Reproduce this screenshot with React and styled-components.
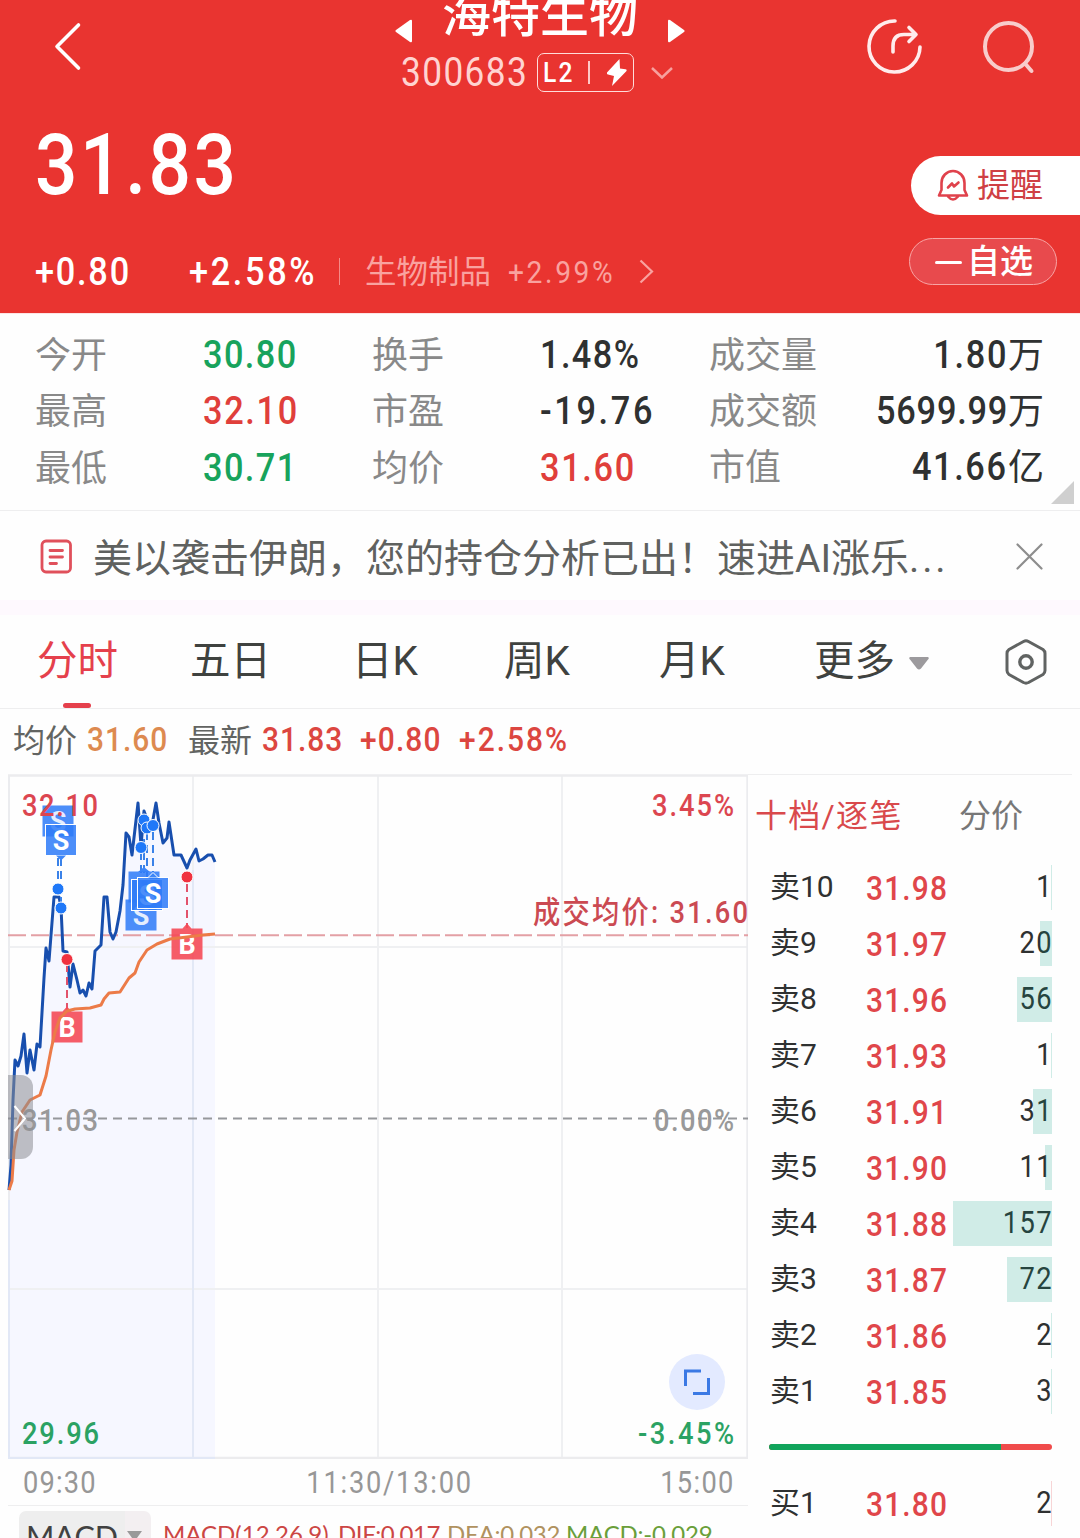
import React from 'react';
import styled, { createGlobalStyle } from 'styled-components';

const RED = '#e93430';
const UP = '#e0464a';
const DOWN = '#18a35c';
const INK = '#2f3131';
const LINE = '#eeeeef';
const NARROW = 0.88;

const Global = createGlobalStyle`
  * { box-sizing: border-box; }
  html, body { margin: 0; padding: 0; background: #fefefe; }
  svg { display: block; flex: none; }
`;

const Page = styled.div`
  width: 1080px;
  height: 1538px;
  overflow: hidden;
  background: #fefefe;
  font-family: Roboto, 'Noto Sans CJK SC', sans-serif;
  color: ${INK};
  white-space: nowrap;
`;

/* Condensed numerals used for every figure on the page */
const Num = styled.span`
  display: inline-block;
  font-size: ${(p) => p.$size || 39}px;
  font-weight: ${(p) => p.$weight || 500};
  letter-spacing: ${(p) => p.$track ?? 1.6}px;
  color: ${(p) => p.$color || 'inherit'};
  transform: scaleX(${NARROW});
  transform-origin: ${(p) => p.$origin || 'left'} center;
`;

/* ---------- header ---------- */
const Header = styled.header`
  height: 313px;
  background: ${RED};
  color: #fff;
`;
const TopBar = styled.div`
  display: grid;
  grid-template-columns: 1fr 290px 1fr;
  height: 93px;
`;
const BackSlot = styled.div`
  display: flex;
  align-items: center;
  padding: 0 0 3px 50px;
`;
const ActionSlot = styled.div`
  display: flex;
  align-items: center;
  justify-content: flex-end;
  gap: 55px;
  padding: 0 41px 4px 0;
`;
const TitleBlock = styled.div`
  display: flex;
  flex-direction: column;
`;
const NameRow = styled.div`
  display: flex;
  justify-content: space-between;
  align-items: flex-start;
  height: 50px;
  svg { margin-top: 19px; }
`;
const Name = styled.h1`
  margin: 0;
  font-size: 49px;
  line-height: 32px;
  font-weight: 500;
`;
const CodeRow = styled.div`
  display: flex;
  align-items: center;
  height: 45px;
  padding-left: 6px;
`;
const CodeSlot = styled.span`
  width: 136px;
`;
const LevelBadge = styled.span`
  display: flex;
  align-items: center;
  width: 97px;
  height: 39px;
  margin-right: 17px;
  padding-left: 5px;
  border: 1.5px solid #ffdcda;
  border-radius: 7px;
`;
const BadgeText = styled.span`
  width: 45px;
`;
const BadgeRule = styled.i`
  width: 1.5px;
  height: 23px;
  margin-right: 17px;
  background: #ffc9c7;
`;
const Quote = styled.div`
  display: flex;
  justify-content: space-between;
  height: 220px;
`;
const QuoteLeft = styled.div`
  padding-left: 35px;
`;
const Price = styled.div`
  height: 145px;
  line-height: 145px;
`;
const ChangeRow = styled.div`
  display: flex;
  align-items: center;
  height: 67px;
`;
const Slot = styled.span`
  width: ${(p) => p.$w}px;
`;
const Rule = styled.i`
  width: 1px;
  height: 27px;
  margin-right: 25px;
  background: #f58a87;
`;
const Sector = styled.span`
  width: 143px;
  padding-bottom: 5px;
  font-size: 31.5px;
  color: #f9a29f;
`;
const QuoteRight = styled.div`
  display: flex;
  flex-direction: column;
  align-items: flex-end;
  gap: 23px;
  padding-top: 63px;
`;
const Remind = styled.button`
  display: flex;
  align-items: center;
  gap: 8px;
  width: 169px;
  height: 59px;
  padding: 0 0 1px 26px;
  border: 0;
  border-radius: 30px 0 0 30px;
  background: #fff;
  color: #cf4044;
  font: 400 33px/57px Roboto, 'Noto Sans CJK SC', sans-serif;
`;
const Watch = styled.button`
  display: flex;
  align-items: center;
  gap: 5px;
  width: 148px;
  height: 47px;
  margin-right: 23px;
  padding: 0 0 0 25px;
  border: 1px solid #f8a5a5;
  border-radius: 24px;
  background: #e84a4d;
  color: #fff;
  font: 500 33px/44px Roboto, 'Noto Sans CJK SC', sans-serif;
`;
const Minus = styled.i`
  width: 27px;
  height: 3px;
  margin-top: 2px;
  border-radius: 2px;
  background: #fff;
`;

/* ---------- statistics ---------- */
const Stats = styled.section`
  position: relative;
  display: grid;
  grid-template-columns: 168px 169px 168px 169px 1fr;
  grid-auto-rows: 56.3px;
  align-items: center;
  height: 198px;
  padding: 14px 36px 0 35px;
  border-bottom: 1px solid ${LINE};
  box-shadow: inset 0 1px #fde4e4;
`;
const StatLabel = styled.span`
  font-size: 36px;
  line-height: 56px;
  height: 56px;
  padding-top: 1px;
  color: #898989;
`;
const StatValue = styled(Num)`
  line-height: 56px;
`;
const Last = styled.div`
  display: flex;
  justify-content: space-between;
`;
const Unit = styled.span`
  font-size: 36px;
  line-height: 56px;
`;
const Fold = styled.i`
  position: absolute;
  right: 6px;
  bottom: 6px;
  width: 23px;
  height: 23px;
  background: #cfcfcf;
  clip-path: polygon(100% 0, 100% 100%, 0 100%);
`;

/* ---------- notice ---------- */
const Notice = styled.section`
  display: flex;
  align-items: center;
  height: 89px;
  padding: 2px 37px 0 40px;
`;
const NoticeText = styled.p`
  flex: 1;
  margin: 4px 0 0 20px;
  font-size: 39px;
  line-height: 60px;
  color: #5f615f;
`;
const Dots = styled.span`
  letter-spacing: 2.8px;
`;
const Band = styled.div`
  height: 15px;
  background: #fef9fe;
`;

/* ---------- period tabs ---------- */
const Tabs = styled.nav`
  display: flex;
  height: 94px;
  padding-left: 37px;
  border-bottom: 1px solid ${LINE};
`;
const Tab = styled.span`
  position: relative;
  width: ${(p) => p.$w}px;
  font-size: 40.5px;
  line-height: 92px;
  color: ${(p) => (p.$active ? '#e5404c' : '#3f423f')};
  &::after {
    content: '';
    position: absolute;
    display: ${(p) => (p.$active ? 'block' : 'none')};
    left: 26px;
    bottom: 0;
    width: 28px;
    height: 5px;
    border-radius: 3px;
    background: #e5404c;
  }
`;
const TabIcon = styled.span`
  display: flex;
  align-items: center;
  width: ${(p) => p.$w}px;
  height: 93px;
`;
const Caret = styled(TabIcon)`
  padding-top: 3px;
`;
const Summary = styled.div`
  display: flex;
  align-items: center;
  height: 65px;
  padding: 0 0 5px 13px;
`;
const SummaryLabel = styled.span`
  width: 74px;
  padding-bottom: 3px;
  font-size: 32px;
  color: #626462;
`;

/* ---------- chart + order book ---------- */
const Board = styled.section`
  display: grid;
  grid-template-columns: 748px 324px;
  height: 764px;
`;
const ChartSide = styled.div`
  display: flex;
  flex-direction: column;
`;
const Axis = styled.div`
  display: grid;
  grid-template-columns: 200px 1fr 200px;
  height: 46px;
  padding: 0 13px 0 23px;
  line-height: 48px;
  color: #979797;
`;
const Tick = styled.span`
  text-align: ${(p) => p.$align};
  padding-left: ${(p) => (p.$align === 'center' ? 22 : 0)}px;
`;
const Macd = styled.div`
  display: flex;
  align-items: flex-start;
  height: 33px;
  margin-left: 8px;
  padding: 5px 0 0 11px;
  border-top: 1px solid ${LINE};
  font-family: Lato, sans-serif;
`;
const MacdPick = styled.span`
  display: flex;
  align-items: center;
  gap: 9px;
  width: 132px;
  height: 51px;
  margin-right: 12px;
  padding: 0 0 2px 7px;
  border-radius: 7px;
  background: linear-gradient(90deg, #eeeeee 80%, #f3eff1 80%);
  font-size: 30.5px;
  color: #414141;
`;
const MacdValue = styled.span`
  width: ${(p) => p.$w}px;
  font-size: 24px;
  line-height: 45px;
  letter-spacing: ${(p) => p.$track || 0}px;
  color: ${(p) => p.$color};
`;
const Book = styled.aside`
  border-top: 1px solid ${LINE};
`;
const BookTabs = styled.div`
  display: flex;
  height: 84px;
  padding-left: 7px;
  font-size: 32px;
  line-height: 83px;
`;
const BookTab = styled.span`
  width: ${(p) => p.$w}px;
  letter-spacing: ${(p) => (p.$active ? 1.3 : 0)}px;
  color: ${(p) => (p.$active ? '#d9494c' : '#777')};
`;
const Level = styled.div`
  position: relative;
  display: grid;
  grid-template-columns: 96px 90px 1fr;
  align-items: center;
  height: 56px;
  padding: 0 20px 0 22px;
  line-height: 56px;
`;
const LevelName = styled.span`
  height: 58px;
  font-size: 30px;
`;
const Qty = styled(Num)`
  height: 58px;
  margin-right: -1px;
  text-align: right;
`;
const Depth = styled.i`
  position: absolute;
  right: 20px;
  top: 6px;
  height: 45px;
  background: ${(p) => (p.$buy ? 'rgba(224,70,74,.22)' : 'rgba(0,155,125,.18)')};
`;
const Ratio = styled.div`
  display: flex;
  height: 6px;
  margin: 25px 20px 25px 21px;
  border-radius: 3px;
  overflow: hidden;
  background: #f04b4b;
  &::before {
    content: '';
    width: 232px;
    background: #10a45b;
  }
`;

const stats = [
  ['今开', '30.80', DOWN, 1.6, '换手', '1.48%', INK, 1.6, '成交量', '1.80', '万', 2],
  ['最高', '32.10', '#e03f3b', 1.9, '市盈', '-19.76', INK, 3, '成交额', '5699.99', '万', 0.9],
  ['最低', '30.71', DOWN, 1.6, '均价', '31.60', '#e03f3b', 1.9, '市值', '41.66', '亿', 1.8],
];

const asks = [
  ['卖10', '31.98', 1, 1],
  ['卖9', '31.97', 20, 12],
  ['卖8', '31.96', 56, 35],
  ['卖7', '31.93', 1, 1],
  ['卖6', '31.91', 31, 19],
  ['卖5', '31.90', 11, 7],
  ['卖4', '31.88', 157, 99],
  ['卖3', '31.87', 72, 45],
  ['卖2', '31.86', 2, 1],
  ['卖1', '31.85', 3, 1],
];

const pricePts =
  '9,1190 11,1165 13,1100 15,1060 18,1066 21,1056 24,1034 27,1073 30,1050 34,1070 37,1044 40,1047 44,978 46,948 49,961 54,897 59,897 61,907 63,951 67,952 70,987 73,964 77,980 80,993 83,990 86,996 89,983 92,989 95,951 101,945 104,897 107,897 110,932 113,939 116,932 120,911 123,885 126,833 129,837 132,855 138,803 141,846 144,811 148,822 152,825 156,803 159,823 163,843 167,838 169,822 174,855 181,855 187,868 190,860 196,849 199,861 203,859 208,855 212,855 215,862';
const avgPts =
  '9,1190 12,1181 14,1150 17,1132 22,1112 30,1100 40,1095 46,1076 51,1050 55,1032 60,1018 67,1011 75,1009 90,1008 101,1005 104,999 109,993 120,992 129,978 135,973 139,962 147,950 157,944 170,939 187,937 203,935 215,934';

const Sell = ({ x, y, ghost }) => (
  <g>
    <rect x={x - 15.5} y={y - 15.5} width="31" height="31" fill="#2f7bf8" fillOpacity=".86" stroke="#fff" strokeWidth={ghost ? 0 : 1} />
    <text x={x} y={y + 10} textAnchor="middle" fontSize="27" fontWeight="700" fill="#fff" opacity={ghost ? 0.85 : 1}>S</text>
  </g>
);

const Buy = ({ x, y }) => (
  <g>
    <path d={`M${x - 15.5},${y - 15.5}h11l4.5,-5l4.5,5h11v31h-31z`} fill="#f54a58" fillOpacity=".9" />
    <text x={x} y={y + 9.5} textAnchor="middle" fontSize="27" fontWeight="700" fill="#fff">B</text>
  </g>
);

const Dot = ({ x, y, c = '#1f78f8' }) => (
  <circle cx={x} cy={y} r="6" fill={c} stroke="#fff" strokeWidth="1" />
);

const Label = ({ x, y, w, color, children }) => (
  <text
    transform={`translate(${x} ${y}) scale(${NARROW} 1)`}
    textLength={w / NARROW}
    lengthAdjust="spacing"
    fontSize="31"
    fontWeight="500"
    fill={color}
  >
    {children}
  </text>
);

const Chart = () => (
  <svg width="748" height="685" viewBox="0 774 748 685" fontFamily="Roboto, 'Noto Sans CJK SC', sans-serif">
    <polygon points={`8,1459 ${pricePts} 215,1459`} fill="#f6f7ff" />
    <g stroke="#eff0f2" strokeWidth="2" fill="none">
      <path d="M193,776V1459M378,776V1459M562,776V1459M9,947H747M9,1289H747" />
      <path d="M9,776V1459M747.3,776V1459" stroke="#ebecef" />
      <path d="M8,775.5H748M8,1458H748" stroke="#ececee" strokeWidth="2.6" />
    </g>
    <path d="M193,870V1459M9,1200V1458H215" stroke="#e2e8f6" strokeWidth="2" fill="none" />
    <path d="M8,1118.5H748" stroke="#96989c" strokeWidth="2" strokeDasharray="9 6" />
    <path d="M8,935.3H748" stroke="#e3a0a5" strokeWidth="2" strokeDasharray="18 5" />
    <polyline points={pricePts} fill="none" stroke="#184fae" strokeWidth="3" strokeLinejoin="round" />

    <g strokeWidth="2" strokeDasharray="8 5" fill="none">
      <path d="M58,858V884M61,858V903" stroke="#3a82e8" />
      <path d="M141,852V880M144,826V880M147,832V880M153,832V878" stroke="#3a82e8" />
      <path d="M187,884V928M67,964V1010" stroke="#e2526b" />
    </g>
    <Sell x={58} y={821} ghost />
    <Sell x={61} y={840} />
    <path d="M56,855.5h10l-5,5z" fill="#3d86f8" />
    <Dot x={58} y={889} />
    <Dot x={61} y={908} />
    <Sell x={141} y={915} ghost />
    <path d="M138,872l6,-5l6,5z" fill="#3d86f8" />
    <Sell x={144} y={887} ghost />
    <Sell x={147} y={895} />
    <Sell x={153} y={893} />
    <path d="M148,877.5l5,-5l5,5" fill="#3d86f8" stroke="#fff" strokeWidth="1" />
    <Dot x={141} y={847.5} />
    <Dot x={144} y={820} />
    <Dot x={147} y={828} />
    <Dot x={153} y={825.5} />
    <Dot x={67} y={959.5} c="#f0323f" />
    <Dot x={187} y={877} c="#f0323f" />
    <Buy x={67} y={1027} />
    <Buy x={187} y={944} />
    <polyline points={avgPts} fill="none" stroke="#ec7b48" strokeWidth="3" strokeLinejoin="round" />

    <Label x={22} y={816} w={76} color="#dc4650">32.10</Label>
    <Label x={652} y={816} w={82} color="#dc4650">3.45%</Label>
    <Label x={533} y={923} w={215} color="#cb4a52">成交均价: 31.60</Label>
    <Label x={22} y={1131} w={76} color="#999">31.03</Label>
    <Label x={654} y={1131} w={80} color="#999">0.00%</Label>
    <Label x={22} y={1443.5} w={77} color="#2ba263">29.96</Label>
    <Label x={638} y={1443.5} w={96} color="#2ba263">-3.45%</Label>

    <path d="M8,1075H21a12,12 0 0 1 12,12V1147a12,12 0 0 1 -12,12H8z" fill="#8c8e94" fillOpacity=".55" />
    <path d="M14.5,1106L25,1118.5L14.5,1131" fill="none" stroke="#fff" strokeWidth="2" />
    <circle cx="697" cy="1382" r="28" fill="#e3eaff" />
    <path d="M701,1371H685.5V1386M693,1393.5H708.5V1378" fill="none" stroke="#3b79e4" strokeWidth="3" />
  </svg>
);

export default function App() {
  return (
    <Page>
      <Global />
      <Header>
        <TopBar>
          <BackSlot>
            <svg width="36" height="54" viewBox="0 0 36 54" fill="none" stroke="#fff" strokeWidth="3.6" strokeLinecap="round" strokeLinejoin="round">
              <path d="M28.5 6L7 27.5L28.5 49" />
            </svg>
          </BackSlot>
          <TitleBlock>
            <NameRow>
              <svg width="18" height="24" viewBox="0 0 18 24"><path d="M17 2v20q0 2-2 1L1 13q-1.200-1 0-2L15 1q2-1 2 1z" fill="#fff" /></svg>
              <Name>海特生物</Name>
              <svg width="18" height="24" viewBox="0 0 18 24"><path d="M1 2v20q0 2 2 1L17 13q1.200-1 0-2L3 1Q1 0 1 2z" fill="#fff" /></svg>
            </NameRow>
            <CodeRow>
              <CodeSlot><Num $size={40} $track={1.6} $weight={400} $color="#ffd3d1">300683</Num></CodeSlot>
              <LevelBadge>
                <BadgeText><Num $size={28} $track={2.4}>L2</Num></BadgeText>
                <BadgeRule />
                <svg width="20" height="27" viewBox="0 0 20 27"><path d="M12.5 0L0 13.5Q-.5 15 1 15.5L7 17L5 27L19.5 12Q20 10.5 18.5 10.3L13 9.5z" fill="#fff" /></svg>
              </LevelBadge>
              <svg width="22" height="12" viewBox="0 0 22 12" fill="none" stroke="#f7a09e" strokeWidth="2.5"><path d="M1 1l10 9.5L21 1" /></svg>
            </CodeRow>
          </TitleBlock>
          <ActionSlot>
            <svg width="60" height="60" viewBox="0 0 60 60" fill="none" stroke="#ffecec" strokeWidth="3.6" strokeLinecap="round" strokeLinejoin="round">
              <path d="M31 5A25.500 25.500 0 1 0 56 31" />
              <path d="M29 36V30Q29 18.500 40 18.500H51M45 11.500L52 18.500L45 25.500" />
            </svg>
            <svg width="60" height="60" viewBox="0 0 60 60" fill="none" stroke="#f8cccb" strokeWidth="4" strokeLinecap="round">
              <circle cx="29.5" cy="30.5" r="23.5" />
              <path d="M46 47.5L52.5 55" />
            </svg>
          </ActionSlot>
        </TopBar>
        <Quote>
          <QuoteLeft>
            <Price><Num $size={85} $track={2.9}>31.83</Num></Price>
            <ChangeRow>
              <Slot $w={154}><Num $track={2}>+0.80</Num></Slot>
              <Slot $w={150}><Num $track={3}>+2.58%</Num></Slot>
              <Rule />
              <Sector>生物制品</Sector>
              <Slot $w={131}><Num $size={32} $track={3} $weight={400} $color="#f9a29f">+2.99%</Num></Slot>
              <svg width="15" height="25" viewBox="0 0 15 25" fill="none" stroke="#f9a29f" strokeWidth="2.2"><path d="M1.5 1.5L13 12.5L1.5 23.5" /></svg>
            </ChangeRow>
          </QuoteLeft>
          <QuoteRight>
            <Remind>
              <svg width="32" height="34" viewBox="0 0 32 34" fill="none" stroke="#e0424c" strokeWidth="2.6" strokeLinecap="round" strokeLinejoin="round">
                <path d="M4.5 22V15a11.5 12 0 0 1 23 0V22L30 27.5H2L4.5 22M11 28.5q5 6 10 0" />
                <path d="M11 19.5L15 15.5L17 18.5L21.5 14.5" />
              </svg>
              提醒
            </Remind>
            <Watch><Minus />自选</Watch>
          </QuoteRight>
        </Quote>
      </Header>

      <Stats>
        {stats.map((s) => (
          <React.Fragment key={s[0]}>
            <StatLabel>{s[0]}</StatLabel>
            <StatValue $color={s[2]} $track={s[3]}>{s[1]}</StatValue>
            <StatLabel>{s[4]}</StatLabel>
            <StatValue $color={s[6]} $track={s[7]}>{s[5]}</StatValue>
            <Last>
              <StatLabel>{s[8]}</StatLabel>
              <span>
                <StatValue $track={s[11]} $origin="right">{s[9]}</StatValue>
                <Unit>{s[10]}</Unit>
              </span>
            </Last>
          </React.Fragment>
        ))}
        <Fold />
      </Stats>

      <Notice>
        <svg width="33" height="35" viewBox="0 0 33 35" fill="none" stroke="#e0505b" strokeWidth="2.8" strokeLinecap="round">
          <rect x="2" y="2" width="28.5" height="31" rx="4" />
          <path d="M10 11.5H22.5M10 18H22.5M10 24.5H16.5" />
        </svg>
        <NoticeText>美以袭击伊朗，您的持仓分析已出！速进AI涨乐<Dots>...</Dots></NoticeText>
        <svg width="27" height="27" viewBox="0 0 27 27" fill="none" stroke="#8d8d8d" strokeWidth="2.2" strokeLinecap="round"><path d="M1.5 1.5l24 24M25.5 1.5l-24 24" /></svg>
      </Notice>
      <Band />

      <Tabs>
        <Tab $w={153} $active>分时</Tab>
        <Tab $w={162}>五日</Tab>
        <Tab $w={152}>日K</Tab>
        <Tab $w={155}>周K</Tab>
        <Tab $w={155}>月K</Tab>
        <Tab $w={95}>更多</Tab>
        <Caret $w={96}>
          <svg width="20" height="13" viewBox="0 0 20 13"><path d="M1 0H19Q20.5 1 19 2.5L12 11.5Q10 13.5 8 11.5L1 2.5Q-.5 1 1 0z" fill="#9c9a9d" /></svg>
        </Caret>
        <TabIcon $w={44}>
          <svg width="42" height="46" viewBox="0 0 42 46" fill="none" stroke="#606362" strokeWidth="3" strokeLinejoin="round">
            <path d="M18.5 2.5Q21 1.2 23.5 2.5L38 10.5Q40 12 40 14.5V31.500Q40 34 38 35.500L23.500 43.500Q21 44.800 18.500 43.500L4 35.500Q2 34 2 31.500V14.500Q2 12 4 10.500z" />
            <circle cx="21" cy="23" r="6.2" strokeWidth="3.4" />
          </svg>
        </TabIcon>
      </Tabs>
      <Summary>
        <SummaryLabel>均价</SummaryLabel>
        <Slot $w={101}><Num $size={34} $track={1.1} $color="#dd8a50">31.60</Num></Slot>
        <SummaryLabel>最新</SummaryLabel>
        <Slot $w={98}><Num $size={34} $track={1.1} $color="#dc4640">31.83</Num></Slot>
        <Slot $w={99}><Num $size={34} $track={1.3} $color="#dc4640">+0.80</Num></Slot>
        <Num $size={34} $track={2.3} $color="#dc4640">+2.58%</Num>
      </Summary>

      <Board>
        <ChartSide>
          <Chart />
          <Axis>
            <Tick $align="left"><Num $size={31} $weight={400} $track={1.3}>09:30</Num></Tick>
            <Tick $align="center"><Num $size={31} $weight={400} $track={2} $origin="center">11:30/13:00</Num></Tick>
            <Tick $align="right"><Num $size={31} $weight={400} $track={1.5} $origin="right">15:00</Num></Tick>
          </Axis>
          <Macd>
            <MacdPick>
              MACD
              <svg width="15" height="10" viewBox="0 0 15 10"><path d="M0 0H15L8.5 9q-1 1-2 0z" fill="#999" /></svg>
            </MacdPick>
            <MacdValue $w={175} $color="#cc4644">MACD(12,26,9)</MacdValue>
            <MacdValue $w={109} $color="#cc4644" $track={-0.4}>DIF:0.017</MacdValue>
            <MacdValue $w={119} $color="#b0925f" $track={-0.3}>DEA:0.032</MacdValue>
            <MacdValue $w={150} $color="#6a9f3a" $track={-0.2}>MACD:-0.029</MacdValue>
          </Macd>
        </ChartSide>
        <Book>
          <BookTabs>
            <BookTab $w={204} $active>十档/逐笔</BookTab>
            <BookTab $w={70}>分价</BookTab>
          </BookTabs>
          {asks.map(([name, price, qty, w]) => (
            <Level key={name}>
              <LevelName>{name}</LevelName>
              <Num $size={34} $track={1.3} $color={UP}>{price}</Num>
              <Qty $size={31} $weight={400} $track={1.6} $origin="right">{qty}</Qty>
              <Depth style={{ width: w }} />
            </Level>
          ))}
          <Ratio />
          <Level>
            <LevelName>买1</LevelName>
            <Num $size={34} $track={1.3} $color={UP}>31.80</Num>
            <Qty $size={31} $weight={400} $track={1.6} $origin="right">2</Qty>
            <Depth $buy style={{ width: 1 }} />
          </Level>
        </Book>
      </Board>
    </Page>
  );
}
